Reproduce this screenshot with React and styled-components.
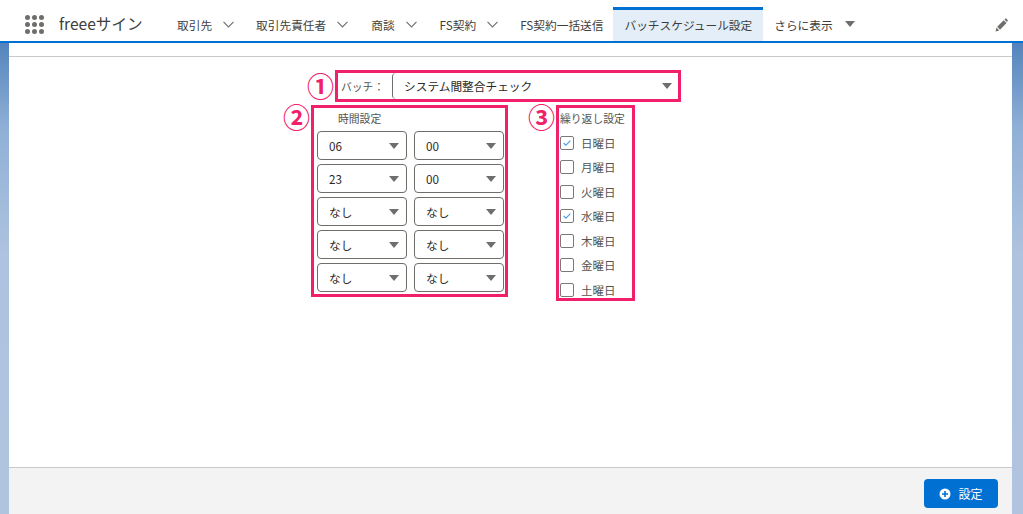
import React from 'react';
import styled, {createGlobalStyle} from 'styled-components';

const GlobalStyle = createGlobalStyle`
  html, body {
    margin: 0;
    padding: 0;
    background: #fff;
  }
  * {
    box-sizing: border-box;
  }
  body {
    font-family: "Noto Sans CJK JP", "Noto Sans", sans-serif;
    color: #3e3e3c;
    overflow: hidden;
  }
`;

const Page = styled.div`
  width: 1023px;
  height: 514px;
  display: flex;
  flex-direction: column;
`;

const Nav = styled.nav`
  height: 43px;
  flex: none;
  display: flex;
  align-items: stretch;
  padding-left: 25px;
  background: #fff;
  border-bottom: 2px solid #0070d2;
`;

const Launcher = styled.div`
  width: 19px;
  height: 19px;
  margin-top: 15px;
  display: grid;
  grid-template-columns: repeat(3, 5px);
  grid-auto-rows: 5px;
  gap: 2px;
`;

const Dot = styled.span`
  border-radius: 50%;
  background: #706e6b;
`;

const AppName = styled.div`
  margin: 12px 23px 0 15px;
  width: 84px;
  font-size: 15.6px;
  line-height: 22px;
  white-space: nowrap;
  color: #3e3e3c;
`;

const NavItem = styled.div`
  display: flex;
  align-items: center;
  gap: ${props => props.$iconGap || 11}px;
  height: 34px;
  margin-top: 7px;
  padding: 0 11px 3px;
  font-size: 11.7px;
  white-space: nowrap;
  margin-right: ${props => props.$gap || 0}px;
  color: #3e3e3c;
  background: ${props => props.$active ? '#e4eef8' : 'transparent'};
  border-top: 3px solid ${props => props.$active ? '#0070d2' : 'transparent'};
`;

const EditButton = styled.div`
  display: flex;
  margin-left: auto;
  margin-right: 15px;
  margin-top: 18px;
  width: 13px;
  height: 14px;
  color: #706e6b;
`;

const Body = styled.div`
  flex: 1;
  min-height: 0;
  display: flex;
  flex-direction: column;
  padding: 0 11px 0 9px;
  background: linear-gradient(180deg, #5484bd 0%, #8fb0d6 18%, #aec3df 45%, #b0c4e0 100%);
`;

const TabStrip = styled.div`
  height: 14px;
  flex: none;
  background: #fff;
  border-bottom: 1px solid #c9c9c9;
`;

const Content = styled.main`
  flex: 1;
  background: #fff;
  padding: 13px 5px 0 0;
  display: flex;
  flex-direction: column;
  align-items: center;
`;

const FormColumn = styled.div`
  width: 346px;
  display: flex;
  flex-direction: column;
  gap: 3px;
`;

const Marked = styled.div`
  position: relative;
  border: 3px solid #f0206a;
`;

const Badge = styled.span`
  position: absolute;
  top: ${props => props.$top}px;
  left: -31px;
  width: 27px;
  height: 27px;
  display: flex;
  align-items: center;
  justify-content: center;
  color: #f0206a;
  font-size: 27px;
  line-height: 1;
  font-weight: 700;
`;

const BatchBox = styled(Marked)`
  height: 32px;
  display: flex;
  align-items: center;
  padding: 0 0 0 3px;
`;

const BatchLabel = styled.label`
  width: 51px;
  padding-bottom: 1px;
  font-size: 10.8px;
  flex: none;
  color: #54534f;
`;

const SelectBox = styled.div`
  flex: ${props => props.$wide ? 1 : 'none'};
  width: ${props => props.$wide ? 'auto' : '90px'};
  height: ${props => props.$wide ? '26px' : '29px'};
  display: flex;
  align-items: center;
  justify-content: space-between;
  padding: ${props => props.$wide ? '0 6px 1px 11px' : '0 7px 0 11px'};
  font-size: 11.7px;
  color: #2b2826;
  background: #fff;
  border: 1px solid #706e6b;
  border-radius: 4px;
  border-width: ${props => props.$wide ? '0 0 0 1px' : '1px'};
`;

const Caret = styled.span`
  width: 0;
  height: 0;
  border-left: 5.5px solid transparent;
  border-right: 5.5px solid transparent;
  border-top: 6px solid #706e6b;
`;

const SettingsRow = styled.div`
  display: flex;
  align-items: flex-start;
  gap: 48px;
  margin-left: -24px;
`;

const TimeBox = styled(Marked)`
  width: 197px;
  height: 192px;
  padding: 2px 0 0 3px;
`;

const TimeTitle = styled.div`
  padding-left: 21px;
  height: 20px;
  margin-bottom: 1px;
  font-size: 10.8px;
  line-height: 16px;
  color: #54534f;
`;

const TimeGrid = styled.div`
  display: grid;
  grid-template-columns: 90px 90px;
  column-gap: 7px;
  row-gap: 4px;
`;

const RepeatBox = styled(Marked)`
  width: 79px;
  height: 196px;
  padding: 2px 0 0 1px;
`;

const RepeatTitle = styled.div`
  height: 23px;
  font-size: 10.8px;
  line-height: 16px;
  white-space: nowrap;
  color: #54534f;
`;

const DayList = styled.div`
  display: flex;
  flex-direction: column;
  gap: 5.5px;
`;

const DayRow = styled.label`
  height: 19px;
  display: flex;
  align-items: center;
  gap: 7px;
  font-size: 11.5px;
  color: #54534f;
`;

const CheckBox = styled.span`
  width: 14px;
  height: 14px;
  flex: none;
  display: flex;
  align-items: center;
  justify-content: center;
  border: 1px solid #7b7976;
  border-radius: 2px;
  background: #fff;
  color: #4a9be8;
`;

const Footer = styled.footer`
  height: 47px;
  flex: none;
  display: flex;
  align-items: center;
  justify-content: flex-end;
  padding-right: 14px;
  background: #f3f3f3;
  border-top: 1px solid #c9c9c9;
`;

const PrimaryButton = styled.button`
  width: 74px;
  height: 29px;
  margin-top: 5px;
  display: flex;
  align-items: center;
  justify-content: center;
  gap: 7px;
  font-family: inherit;
  font-size: 12px;
  color: #fff;
  background: #0070d2;
  border: none;
  border-radius: 4px;
  padding: 0;
`;

const Chevron = () => (
  <svg width="11" height="7" viewBox="0 0 11 7" fill="none" stroke="#706e6b" strokeWidth="1.1">
    <path d="M0.5 0.8 5.5 6 10.5 0.8" />
  </svg>
);

const navItems = [
  {label: '取引先', gap: 0},
  {label: '取引先責任者', gap: 1},
  {label: '商談', gap: 1},
  {label: 'FS契約', gap: 0},
  {label: 'FS契約一括送信', gap: -1, plain: true},
];

const times = [
  ['06', '00'],
  ['23', '00'],
  ['なし', 'なし'],
  ['なし', 'なし'],
  ['なし', 'なし'],
];

const days = [
  {name: '日曜日', on: true},
  {name: '月曜日'},
  {name: '火曜日'},
  {name: '水曜日', on: true},
  {name: '木曜日'},
  {name: '金曜日'},
  {name: '土曜日'},
];

const App = () => {
  return (
    <Page>
      <GlobalStyle />
      <Nav>
        <Launcher>
          {Array.from({length: 9}).map((_, i) => <Dot key={i} />)}
        </Launcher>
        <AppName>freeeサイン</AppName>
        {navItems.map(item => (
          <NavItem key={item.label} $gap={item.gap}>
            {item.label}
            {!item.plain && <Chevron />}
          </NavItem>
        ))}
        <NavItem $active>バッチスケジュール設定</NavItem>
        <NavItem $iconGap={12}>
          さらに表示
          <Caret />
        </NavItem>
        <EditButton>
          <svg width="13" height="14" viewBox="0 0 13 14" fill="currentColor">
            <path d="M0.5 13.5 1.4 9.6 4.2 12.5Z" />
            <path d="M2.2 8.8 8.7 2.2 11.5 5 5 11.7Z" />
            <path d="M9.5 1.4 10.3 0.6Q10.8 0.2 11.3 0.6L12.6 2Q13 2.5 12.6 3L11.8 3.9 Z" />
          </svg>
        </EditButton>
      </Nav>
      <Body>
        <TabStrip />
        <Content>
          <FormColumn>
            <BatchBox>
              <Badge $top={-1}>①</Badge>
              <BatchLabel>バッチ：</BatchLabel>
              <SelectBox $wide>
                システム間整合チェック
                <Caret />
              </SelectBox>
            </BatchBox>
            <SettingsRow>
              <TimeBox>
                <Badge $top={-5}>②</Badge>
                <TimeTitle>時間設定</TimeTitle>
                <TimeGrid>
                  {times.flat().map((value, i) => (
                    <SelectBox key={i}>
                      {value}
                      <Caret />
                    </SelectBox>
                  ))}
                </TimeGrid>
              </TimeBox>
              <RepeatBox>
                <Badge $top={-5}>③</Badge>
                <RepeatTitle>繰り返し設定</RepeatTitle>
                <DayList>
                  {days.map(day => (
                    <DayRow key={day.name}>
                      <CheckBox>
                        {day.on && (
                          <svg width="8" height="6" viewBox="0 0 8 6" fill="none" stroke="currentColor" strokeWidth="1.1">
                            <path d="M0.6 3 2.9 5.2 7.4 0.6" />
                          </svg>
                        )}
                      </CheckBox>
                      {day.name}
                    </DayRow>
                  ))}
                </DayList>
              </RepeatBox>
            </SettingsRow>
          </FormColumn>
        </Content>
        <Footer>
          <PrimaryButton>
            <svg width="12" height="12" viewBox="0 0 12 12">
              <circle cx="6" cy="6" r="5.5" fill="#fff" />
              <path d="M6 3V9M3 6H9" stroke="#0070d2" strokeWidth="1.6" />
            </svg>
            設定
          </PrimaryButton>
        </Footer>
      </Body>
    </Page>
  );
};

export default App;
